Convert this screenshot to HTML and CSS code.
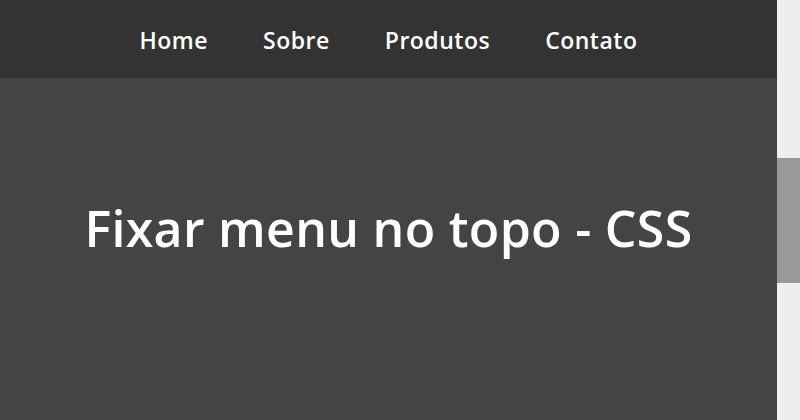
FILE: index.html
```html
<!DOCTYPE html>
<html lang="pt-BR">
<head>
<meta charset="utf-8">
<title>Fixar menu no topo - CSS</title>
<link rel="stylesheet" href="styles.css">
</head>
<body>
<div class="window">
  <div class="page">
    <nav class="menu">
      <ul class="menu-list">
        <li><a href="#">Home</a></li>
        <li><a href="#">Sobre</a></li>
        <li><a href="#">Produtos</a></li>
        <li><a href="#">Contato</a></li>
      </ul>
    </nav>
    <main class="content">
      <h1 class="title">Fixar menu no topo - CSS</h1>
    </main>
  </div>
  <div class="scrollbar"><div class="thumb"></div></div>
</div>
</body>
</html>
```
FILE: styles.css
```css
* { box-sizing: border-box; }
html, body { margin: 0; padding: 0; height: 100%; }
body {
  font-family: "Open Sans", Lato, sans-serif;
  background: #444;
  color: #fff;
}
.window {
  display: grid;
  grid-template-columns: 777px 23px;
  height: 420px;
  overflow: hidden;
}
.page {
  display: flex;
  flex-direction: column;
  background: #444;
}
.menu {
  height: 78px;
  background: #333;
  display: flex;
  align-items: center;
  justify-content: center;
}
.menu-list {
  list-style: none;
  margin: 0;
  padding: 2px 0 0 0;
  display: flex;
  gap: 55px;
}
.menu-list a {
  color: #fff;
  text-decoration: none;
  font-size: 23px;
  font-weight: 600;
  letter-spacing: 0.5px;
}
.content {
  flex: 1;
  display: flex;
  justify-content: center;
  padding-top: 120px;
}
.title {
  margin: 0;
  font-size: 50px;
  font-weight: 600;
  letter-spacing: 0.3px;
  line-height: 60px;
}
.scrollbar {
  background: #eee;
  padding-top: 158px;
}
.thumb {
  height: 125px;
  background: #999;
}
```
